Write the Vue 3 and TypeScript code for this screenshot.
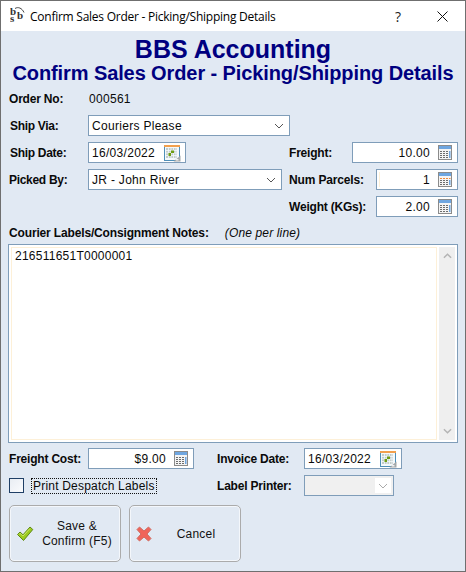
<script setup lang="ts">
const title = 'Confirm Sales Order - Picking/Shipping Details'
</script>

<template>
  <div class="window">
    <svg width="0" height="0" class="defs">
      <defs>
        <symbol id="cal" viewBox="0 0 17 17">
          <rect x="0.5" y="1.5" width="15" height="14" fill="#f4f9fc" stroke="#4f8fb8" />
          <rect x="0" y="0" width="16" height="2" fill="#f2a04e" />
          <rect x="2" y="3" width="11" height="10" fill="#c3cdcb" />
          <path d="M4.500 3v10M7 3v10M9.500 3v10M12 3v10M2 5.500h11M2 8h11M2 10.500h11" stroke="#f4f9fc" stroke-width="0.8" />
          <rect x="7" y="5.500" width="3" height="2.500" fill="#6f9e12" />
          <rect x="4.500" y="8" width="2.500" height="3" fill="#6f9e12" />
          <path d="M9.500 16.500H16.500V10.500Z" fill="#a4a8aa" />
          <path d="M12 14h2.500v1.500H12z" fill="#eef0f1" />
        </symbol>
        <symbol id="calc" viewBox="0 0 14 15">
          <rect x="0" y="0" width="14" height="15" fill="#8b8b8b" />
          <rect x="1" y="1" width="12" height="13" fill="#f4f4f4" />
          <rect x="1" y="1" width="12" height="3" fill="#6fa6e0" />
          <path d="M2 6h2v1H2zM5 6h2v1H5zM8 6h2v1H8zM2 8h2v1H2zM5 8h2v1H5zM8 8h2v1H8zM2 10h2v1H2zM5 10h2v1H5zM8 10h2v1H8zM2 12h2v1H2zM5 12h2v1H5zM8 12h2v1H8z" fill="#6d6d6d" />
          <rect x="11" y="6" width="1.500" height="7" fill="#6fa6e0" />
        </symbol>
        <symbol id="calco" viewBox="0 0 14 15">
          <rect x="0" y="0" width="14" height="15" fill="#8b8b8b" />
          <rect x="1" y="1" width="12" height="13" fill="#f4f4f4" />
          <rect x="1" y="1" width="12" height="3" fill="#6fa6e0" />
          <path d="M2 6h2v1H2zM5 6h2v1H5zM8 6h2v1H8zM11 6h1.500v1H11z" fill="#ee8a3c" />
          <path d="M2 8h2v1H2zM5 8h2v1H5zM8 8h2v1H8zM2 10h2v1H2zM5 10h2v1H5zM8 10h2v1H8zM2 12h2v1H2zM5 12h2v1H5zM8 12h2v1H8z" fill="#6d6d6d" />
          <rect x="11" y="8" width="1.500" height="5" fill="#6fa6e0" />
        </symbol>
        <symbol id="chev" viewBox="0 0 10 6">
          <path d="M1 1 5 5 9 1" fill="none" stroke="currentColor" stroke-width="1" />
        </symbol>
      </defs>
    </svg>

    <header class="titlebar">
      <svg class="logo" width="17" height="20" viewBox="0 0 17 20">
        <path d="M5 2.500C8 0.500 12 2 14 6.500" fill="none" stroke="#333" stroke-width="0.9" />
        <text x="0" y="9" class="logo-t">b</text>
        <text x="0" y="16" class="logo-t">s</text>
        <text x="7" y="13" class="logo-t">b</text>
      </svg>
      <span class="title-text">{{ title }}</span>
      <span class="help">?</span>
      <svg class="close" width="11" height="11" viewBox="0 0 11 11">
        <path d="M0.500 0.500 10.500 10.500M10.500 0.500 0.500 10.500" stroke="#111" stroke-width="1" fill="none" />
      </svg>
    </header>

    <main class="body">
      <h1 class="h1">BBS Accounting</h1>
      <h2 class="h2">{{ title }}</h2>

      <div class="order-row">
        <span class="label tight order-label">Order No:</span>
        <span class="txt">000561</span>
      </div>

      <div class="grid">
        <label class="label tighter in1 r1">Ship Via:</label>
        <div class="field select via r1">
          <span class="txt">Couriers Please</span>
          <svg class="chev" width="10" height="6"><use href="#chev" /></svg>
        </div>

        <label class="label tighter in1 r2">Ship Date:</label>
        <div class="field date d2 r2">
          <span class="txt">16/03/2022</span>
          <svg class="ico" width="17" height="17"><use href="#cal" /></svg>
        </div>
        <label class="label tight c3 r2">Freight:</label>
        <div class="field num wide c4 r2">
          <span class="txt">10.00</span>
          <svg class="ico-c" width="14" height="15"><use href="#calc" /></svg>
        </div>

        <label class="label tighter in0 r3">Picked By:</label>
        <div class="field select r3">
          <span class="txt">JR - John River</span>
          <svg class="chev" width="10" height="6"><use href="#chev" /></svg>
        </div>
        <label class="label slim c3 r3">Num Parcels:</label>
        <div class="field num narrow focus-line c4 r3">
          <span class="txt">1</span>
          <svg class="ico-c" width="14" height="15"><use href="#calco" /></svg>
        </div>

        <label class="label tight c3 r4">Weight (KGs):</label>
        <div class="field num narrow c4 r4">
          <span class="txt">2.00</span>
          <svg class="ico-c" width="14" height="15"><use href="#calc" /></svg>
        </div>
      </div>

      <div class="notes-head">
        <span class="label slim">Courier Labels/Consignment Notes:</span>
        <em class="hint">(One per line)</em>
      </div>

      <div class="notes">
        <div class="notes-text"><span class="txt">216511651T0000001</span></div>
        <div class="scroll">
          <svg width="9" height="6" viewBox="0 0 10 6"><path d="M1 5 5 1 9 5" fill="none" stroke="#b4b4b4" stroke-width="1.600" /></svg>
          <svg width="9" height="6" viewBox="0 0 10 6"><path d="M1 1 5 5 9 1" fill="none" stroke="#b4b4b4" stroke-width="1.600" /></svg>
        </div>
      </div>

      <div class="bottom">
        <label class="label tight b-l">Freight Cost:</label>
        <div class="field num wide">
          <span class="txt">$9.00</span>
          <svg class="ico-c" width="14" height="15"><use href="#calc" /></svg>
        </div>
        <label class="label tight">Invoice Date:</label>
        <div class="field date">
          <span class="txt">16/03/2022</span>
          <svg class="ico" width="17" height="17"><use href="#cal" /></svg>
        </div>

        <div class="check-wrap">
          <span class="checkbox"></span>
          <span class="txt check-label">Print Despatch Labels</span>
        </div>
        <label class="label tight">Label Printer:</label>
        <div class="field disabled">
          <span class="dd"><svg class="chev-d" width="10" height="6"><use href="#chev" /></svg></span>
        </div>
      </div>

      <div class="buttons">
        <button class="btn" type="button">
          <svg class="btn-ico" width="18" height="17" viewBox="0 0 18 17">
            <path d="M1.500 9.500 4 7 7 9.800 14 2 16.800 4.500 7.500 15.500Z" fill="#9ccb1e" stroke="#5e8a16" stroke-width="1" stroke-linejoin="round" />
            <path d="M3 9.300 4 8.300 7 11 14 3.500" fill="none" stroke="#cbe66a" stroke-width="1" />
          </svg>
          <span class="btn-text">Save &amp;<br />Confirm (F5)</span>
        </button>
        <button class="btn" type="button">
          <svg class="btn-ico" width="16" height="16" viewBox="0 0 16 16">
            <path d="M1 3.500 3.500 1 8 5 12.500 1 15 3.500 11 8 15 12.500 12.500 15 8 11 3.500 15 1 12.500 5 8Z" fill="#f0645a" stroke="#cf6d62" stroke-width="1" stroke-linejoin="round" />
          </svg>
          <span class="btn-text">Cancel</span>
        </button>
      </div>
    </main>
  </div>
</template>

<style scoped>
.defs { position: absolute; }
.window {
  width: 466px;
  height: 572px;
  box-sizing: border-box;
  border: 1px solid #6f6f6f;
  background: #e1e9f3;
  font-family: "Liberation Sans", Arial, sans-serif;
  font-size: 12px;
  color: #0a0a0a;
  overflow: hidden;
}
.titlebar {
  height: 30px;
  background: #fff;
  display: flex;
  align-items: center;
  padding-left: 9px;
  font-family: "Open Sans", sans-serif;
}
.logo { flex: none; margin-right: 3px; }
.logo-t { font-family: "Liberation Serif", serif; font-size: 11px; font-weight: 700; fill: #333; }
.title-text { font-size: 12px; letter-spacing: -0.25px; color: #000; width: 365px; white-space: nowrap; }
.help { width: 42px; font-size: 14px; color: #222; }
.close { flex: none; }
.body { padding: 0 7px; }
.h1, .h2 { margin: 0; text-align: center; color: #000080; font-weight: 700; white-space: nowrap; }
.h1 { font-size: 25px; line-height: 26px; margin-top: 5px; }
.h2 { font-size: 20px; line-height: 21px; letter-spacing: -0.1px; margin-top: 1px; }
.label { font-weight: 700; white-space: nowrap; }
.tight { letter-spacing: -0.2px; }
.tighter { letter-spacing: -0.3px; }
.slim { letter-spacing: -0.15px; }
.txt { letter-spacing: 0.3px; white-space: nowrap; }
.order-row { display: flex; align-items: center; height: 16px; margin-top: 7px; padding-left: 1px; }
.order-label { width: 80px; }
.grid {
  display: grid;
  grid-template-columns: 80px 194px 1fr;
  grid-auto-rows: 21px;
  row-gap: 6px;
  margin-top: 8px;
  align-items: center;
}
.in1 { padding-left: 2px; grid-column: 1; }
.in0 { padding-left: 1px; grid-column: 1; }
.r1 { grid-row: 1; }
.r2 { grid-row: 2; }
.r3 { grid-row: 3; }
.r4 { grid-row: 4; }
.c3 { grid-column: 3; padding-left: 7px; }
.c4 { grid-column: 3; justify-self: end; }
.field {
  box-sizing: border-box;
  height: 21px;
  background: #fff;
  border: 1px solid #7f9db9;
  display: flex;
  align-items: center;
  position: relative;
}
.select { grid-column: 2; width: 194px; padding: 0 4px 0 3px; justify-content: space-between; }
.via { width: 202px; padding-left: 3px; }
.chev { color: #555; margin-right: 1px; }
.date { width: 98px; padding: 0 4px 0 3px; justify-content: space-between; }
.d2 { grid-column: 2; }
.ico { flex: none; margin-top: 1px; }
.num { justify-content: flex-end; padding-right: 5px; }
.wide { width: 106px; }
.narrow { width: 82px; }
.num .txt { margin-right: 8px; }
.ico-c { flex: none; }
.focus-line::before {
  content: "";
  position: absolute;
  left: 2px;
  top: 2px;
  bottom: 2px;
  width: 1px;
  background: #fdf0d8;
}
.notes-head { display: flex; align-items: center; height: 16px; margin-top: 8px; padding-left: 1px; }
.hint { margin-left: 16px; letter-spacing: 0.15px; }
.notes {
  box-sizing: border-box;
  height: 199px;
  margin-top: 3px;
  border: 1px solid #7f9db9;
  background: #fff;
  display: flex;
  padding: 2px;
  gap: 2px;
}
.notes-text {
  flex: 1;
  border: 1px solid #fdf0d8;
  padding: 1px 0 0 3px;
  line-height: 14px;
}
.notes-text .txt { letter-spacing: 0.25px; }
.scroll {
  width: 16px;
  background: #efefef;
  display: flex;
  flex-direction: column;
  justify-content: space-between;
  align-items: center;
  padding: 6px 0;
  box-sizing: border-box;
}
.bottom {
  display: grid;
  grid-template-columns: 80px 129px 87px 1fr;
  grid-auto-rows: 21px;
  row-gap: 6px;
  margin-top: 5px;
  align-items: center;
}
.b-l { padding-left: 1px; }
.check-wrap { grid-column: 1 / span 2; display: flex; align-items: center; padding-left: 1px; }
.checkbox {
  box-sizing: border-box;
  width: 15px;
  height: 15px;
  border: 1px solid #1f3f66;
  background: linear-gradient(135deg, #e9edf3, #fafbfd);
  flex: none;
}
.check-label { margin-left: 8px; outline: 1px dotted #111; line-height: 14px; padding: 0 1px; letter-spacing: 0.2px; }
.disabled { width: 90px; background: #f0f0f0; }
.dd {
  position: absolute;
  right: 2px;
  top: 2px;
  bottom: 2px;
  width: 16px;
  background: #fff;
  display: flex;
  align-items: center;
  justify-content: center;
}
.chev-d { color: #aaa; }
.buttons { display: flex; gap: 8px; margin-top: 9px; padding-left: 1px; }
.btn {
  box-sizing: border-box;
  width: 112px;
  height: 57px;
  border: 1px solid #ababab;
  border-radius: 5px;
  background: #e1e9f3;
  box-shadow: inset 0 0 0 1px #f4f7fb;
  display: flex;
  align-items: center;
  padding: 0 0 0 6px;
  font: inherit;
  color: #111;
}
.btn-ico { flex: none; }
.btn-text { flex: 1; text-align: center; line-height: 15px; letter-spacing: 0.2px; padding-top: 1px; }
</style>

<style>
html, body { margin: 0; background: #e1e9f3; }
</style>
